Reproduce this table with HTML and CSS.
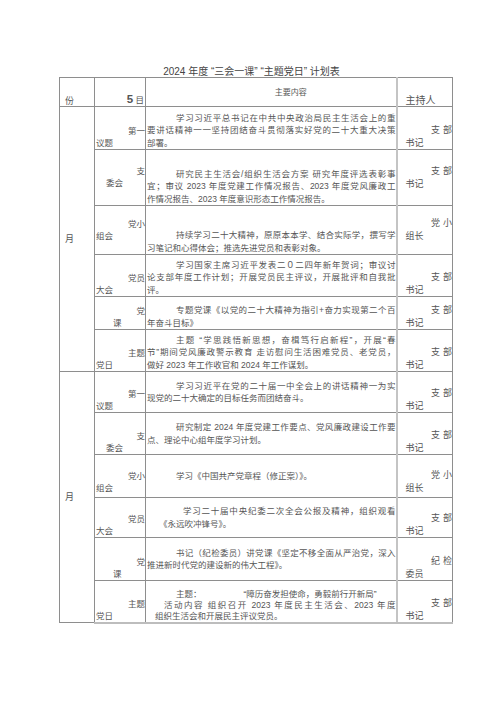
FILE: index.html
```html
<!DOCTYPE html>
<html lang="zh-CN">
<head>
<meta charset="utf-8">
<title>2024年度计划表</title>
<link rel="stylesheet" href="styles.css">
</head>
<body>
<div class="page">
  <h1 class="title">2024 年度 “三会一课” “主题党日” 计划表</h1>
  <table class="plan">
    <colgroup>
      <col class="c-month"><col class="c-type"><col class="c-body"><col class="c-host">
    </colgroup>
    <thead>
      <tr class="h30">
        <th class="month-h">份</th>
        <th class="type-h"><b class="num">5</b> 目</th>
        <th class="body-h">主要内容</th>
        <th class="host-h">主持人</th>
      </tr>
    </thead>
    <tbody>
      <tr class="h44">
        <td class="month" rowspan="6">月</td>
        <td class="lbl"><span class="a">第一</span><span class="b">议题</span></td>
        <td class="body bottom"><span class="ln in">学习习近平总书记在中共中央政治局民主生活会上的重</span><span class="ln">要讲话精神一一坚持团结奋斗贯彻落实好党的二十大重大决策</span><span class="end">部署。</span></td>
        <td class="host"><span class="a">支部</span><span class="b">书记</span></td>
      </tr>
      <tr class="h57">
        <td class="lbl mid"><span class="a">支</span><span class="b b-mid">委会</span></td>
        <td class="body bottom"><span class="ln in">研究民主生活会/组织生活会方案 研究年度评选表彰事</span><span class="ln">宜；审议 2023 年度党建工作情况报告、2023 年度党风廉政工</span><span class="end">作情况报告、2023 年度意识形态工作情况报告。</span></td>
        <td class="host mid"><span class="a">支部</span><span class="b">书记</span></td>
      </tr>
      <tr class="h50">
        <td class="lbl mid"><span class="a">党小</span><span class="b">组会</span></td>
        <td class="body bottom"><span class="ln in">持续学习二十大精神，原原本本学、结合实际学，撰写学</span><span class="end">习笔记和心得体会；推选先进党员和表彰对象。</span></td>
        <td class="host mid"><span class="a">党小</span><span class="b">组长</span></td>
      </tr>
      <tr class="h43">
        <td class="lbl"><span class="a">党员</span><span class="b">大会</span></td>
        <td class="body bottom"><span class="ln in">学习国家主席习近平发表二０二四年新年贺词；审议讨</span><span class="ln">论支部年度工作计划；开展党员民主评议，开展批评和自我批</span><span class="end">评。</span></td>
        <td class="host"><span class="a">支部</span><span class="b">书记</span></td>
      </tr>
      <tr class="h34">
        <td class="lbl"><span class="a">党</span><span class="b b-far">课</span></td>
        <td class="body bottom"><span class="ln in">专题党课《以党的二十大精神为指引+奋力实现第二个百</span><span class="end">年奋斗目标》</span></td>
        <td class="host"><span class="a">支部</span><span class="b">书记</span></td>
      </tr>
      <tr class="h43">
        <td class="lbl"><span class="a">主题</span><span class="b">党日</span></td>
        <td class="body bottom"><span class="ln in">主题 “学思践悟新思想，奋楫笃行启新程”，开展“春</span><span class="ln">节”期间党风廉政警示教育 走访慰问生活困难党员、老党员，</span><span class="end">做好 2023 年工作收官和 2024 年工作谋划。</span></td>
        <td class="host"><span class="a">支部</span><span class="b">书记</span></td>
      </tr>
      <tr class="h42">
        <td class="month" rowspan="6">月</td>
        <td class="lbl"><span class="a">第一</span><span class="b">议题</span></td>
        <td class="body"><span class="ln in">学习习近平在党的二十届一中全会上的讲话精神一为实</span><span class="end">现党的二十大确定的目标任务而团结奋斗。</span></td>
        <td class="host"><span class="a">支部</span><span class="b">书记</span></td>
      </tr>
      <tr class="h43">
        <td class="lbl"><span class="a">支</span><span class="b b-mid">委会</span></td>
        <td class="body"><span class="ln in">研究制定 2024 年度党建工作要点、党风廉政建设工作要</span><span class="end">点、理论中心组年度学习计划。</span></td>
        <td class="host"><span class="a">支部</span><span class="b">书记</span></td>
      </tr>
      <tr class="h44">
        <td class="lbl lift"><span class="a">党小</span><span class="b">组会</span></td>
        <td class="body"><span class="end in">学习《中国共产党章程（修正案）》。</span></td>
        <td class="host lift"><span class="a">党小</span><span class="b">组长</span></td>
      </tr>
      <tr class="h41">
        <td class="lbl"><span class="a">党员</span><span class="b">大会</span></td>
        <td class="body"><span class="ln in-wide">学习二十届中央纪委二次全会公报及精神，组织观看</span><span class="end in-small">《永远吹冲锋号》。</span></td>
        <td class="host"><span class="a">支部</span><span class="b">书记</span></td>
      </tr>
      <tr class="h44">
        <td class="lbl"><span class="a">党</span><span class="b b-far">课</span></td>
        <td class="body"><span class="ln in">书记（纪检委员）讲党课《坚定不移全面从严治党，深入</span><span class="end">推进新时代党的建设新的伟大工程》。</span></td>
        <td class="host"><span class="a">纪检</span><span class="b">委员</span></td>
      </tr>
      <tr class="h43">
        <td class="lbl"><span class="a">主题</span><span class="b">党日</span></td>
        <td class="body bottom tight"><span class="end in">主题：<span class="gap">“障历奋发担使命，勇毅前行开新局”</span></span><span class="ln in-small2">活动内容 组织召开 2023 年度民主生活会、2023 年度</span><span class="end in-tiny">组织生活会和开展民主评议党员。</span></td>
        <td class="host"><span class="a">支部</span><span class="b">书记</span></td>
      </tr>
    </tbody>
  </table>
</div>
</body>
</html>
```
FILE: styles.css
```css
* { box-sizing: border-box; }

body {
  margin: 0;
  background: #fff;
  color: #555;
  font-family: "Liberation Sans", "Noto Sans CJK SC", sans-serif;
}

.page {
  width: 500px;
  padding-top: 66px;
}

.title {
  margin: 0;
  padding-left: 3px;
  font-size: 10px;
  font-weight: normal;
  line-height: 11px;
  text-align: center;
  color: #444;
}

.plan {
  margin-left: 59px;
  width: 393px;
  table-layout: fixed;
  border-collapse: collapse;
  font-size: 8.5px;
  line-height: 12.5px;
}

.c-month { width: 35px; }
.c-type { width: 51px; }
.c-body { width: 251px; }
.c-host { width: 56px; }

.plan th,
.plan td {
  border: 1px solid #8e8e8e;
  padding: 0;
  font-weight: normal;
}

.plan tbody tr:last-child td { border-bottom: 2px solid #bdbdbd; }
.plan .host,
.plan .host-h { border-left: 2px solid #c4c4c4; }

/* row heights (border-collapse adds the 1px rule) */
.h30 { height: 29px; }
.h34 { height: 33px; }
.h41 { height: 40px; }
.h42 { height: 41px; }
.h43 { height: 42px; }
.h44 { height: 43px; }
.h50 { height: 49px; }
.h57 { height: 56px; }

/* header */
.month-h {
  vertical-align: bottom;
  text-align: left;
  padding-left: 5px !important;
  font-size: 9px;
  line-height: 10px;
}
.type-h {
  vertical-align: bottom;
  text-align: right;
  padding-right: 1px !important;
  font-size: 8.5px;
  line-height: 11px;
}
.num {
  font-size: 11.5px;
  font-weight: bold;
  font-family: "Liberation Sans", sans-serif;
}
.body-h {
  vertical-align: top;
  text-align: center;
  padding: 9px 0 0 40px !important;
  font-size: 8px;
}
.host-h {
  vertical-align: bottom;
  text-align: left;
  padding-left: 8px !important;
  font-size: 10px;
  line-height: 10px;
}

/* month column */
.month {
  vertical-align: middle;
  text-align: left;
  padding-left: 5px !important;
  font-size: 9px;
}

/* type labels */
.lbl {
  vertical-align: bottom;
  padding-left: 1px !important;
  font-size: 8.5px;
  line-height: 11px;
}
.lbl .a { display: block; text-align: right; padding-bottom: 1px; }
.lbl .b { display: block; text-align: left; }
.lbl .b-mid { padding-left: 10px; }
.lbl .b-far { padding-left: 17px; }

.plan .mid { vertical-align: middle; }
.plan .lift { padding-bottom: 3px !important; }

/* content */
.body {
  vertical-align: middle;
  padding-left: 1px !important;
}
.body.bottom { vertical-align: bottom; }
.body.tight { line-height: 11px; }
.body .ln {
  display: block;
  text-align: justify;
  text-align-last: justify;
}
.body .end { display: block; }
.body .in { padding-left: 29px; }
.body .in-wide { padding-left: 36px; }
.body .in-small { padding-left: 12px; }
.body .in-small2 { padding-left: 17px; }
.body .in-tiny { padding-left: 8px; }
.gap { margin-left: 42px; }

/* host */
.host {
  vertical-align: bottom;
  padding-left: 8px !important;
  font-size: 9px;
  line-height: 11px;
}
.host .a {
  display: block;
  text-align: right;
  letter-spacing: 3px;
  margin-right: -3px;
  padding-bottom: 2px;
}
.host .b { display: block; text-align: left; }
```
